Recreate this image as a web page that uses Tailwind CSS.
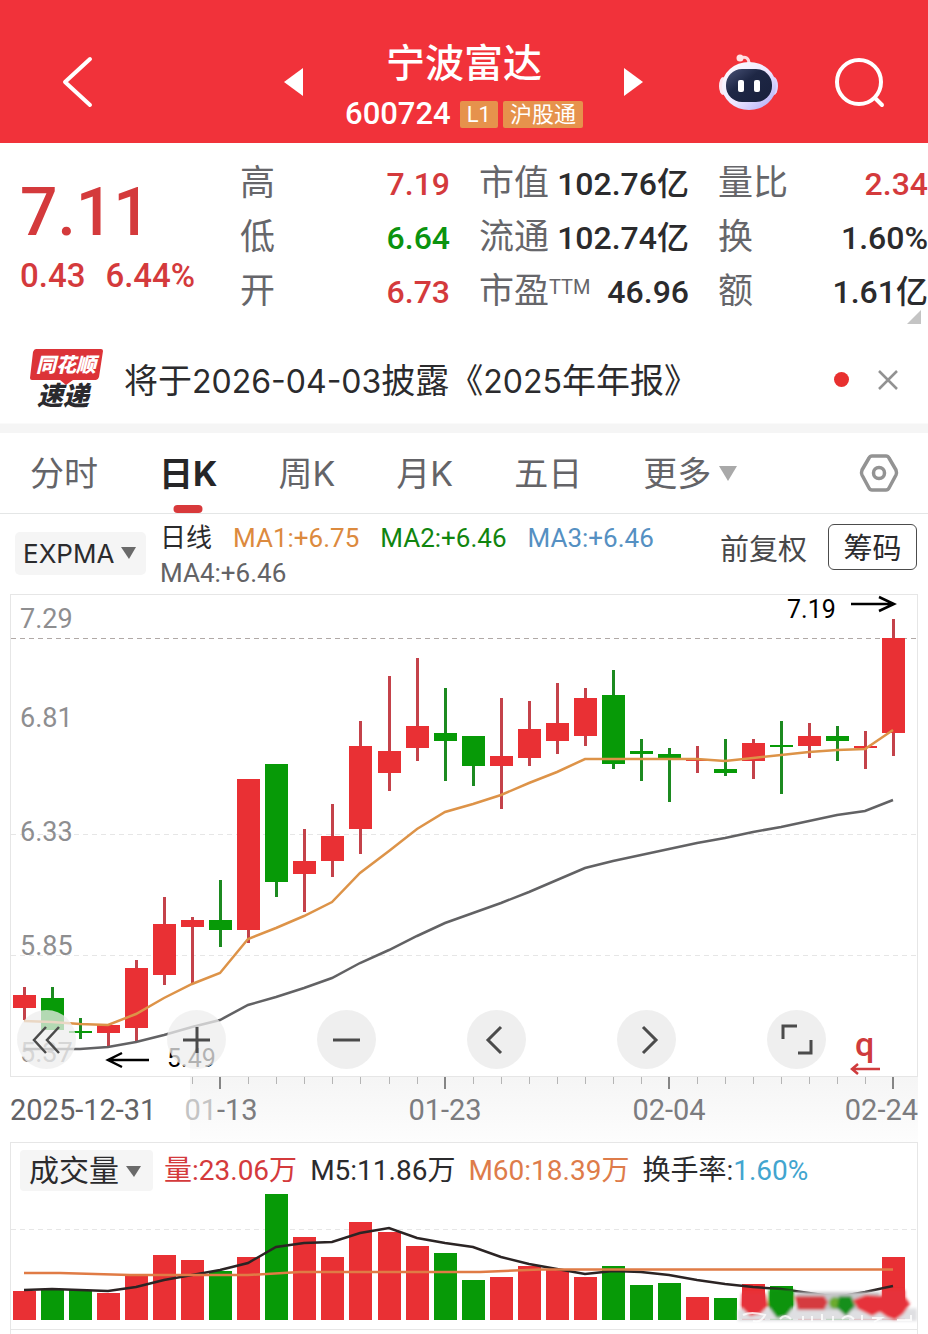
<!DOCTYPE html>
<html lang="zh-CN">
<head>
<meta charset="utf-8">
<meta name="viewport" content="width=device-width, initial-scale=1">
<title>宁波富达 600724</title>
<script src="https://cdn.jsdelivr.net/npm/@tailwindcss/browser@4"></script>
</head>
<body class="bg-white text-[#2b2b2d] font-['Roboto','Noto_Sans_CJK_SC',sans-serif]">

<header class="grid h-[143px] grid-cols-[1fr_auto_1fr] items-center bg-[#f1323a] pt-5 text-white">
  <div class="flex items-center justify-between pl-[60px]">
    <button aria-label="返回"><svg class="block" width="36" height="54" viewBox="0 0 36 54" fill="none" stroke="#fff" stroke-width="4" stroke-linecap="round" stroke-linejoin="round"><path d="M30 4 5 27 30 50"/></svg></button>
    <button aria-label="上一只" class="mr-[41px]"><svg class="block" width="20" height="30" viewBox="0 0 20 30" fill="#fff"><path d="M0 15 19 1V29Z"/></svg></button>
  </div>
  <div class="flex flex-col items-center pt-4">
    <h1 class="text-[39px] leading-[52px] font-medium">宁波富达</h1>
    <div class="flex h-[52px] items-center gap-[5px] pb-[2px]">
      <span class="mr-1 text-[31px] font-medium">600724</span>
      <span class="flex h-[27px] items-center rounded-[2px] bg-[#e6924c] px-[7px] text-[22px]">L1</span>
      <span class="flex h-[27px] items-center rounded-[2px] bg-[#e6924c] px-[7px] text-[22px]">沪股通</span>
    </div>
  </div>
  <div class="flex items-center justify-between pr-[42px] pl-[41px]">
    <button aria-label="下一只"><svg class="block" width="20" height="30" viewBox="0 0 20 30" fill="#fff"><path d="M19 15 0 1V29Z"/></svg></button>
    <div class="flex items-center gap-[54px]">
      <button aria-label="智能助手"><svg class="block" width="62" height="58" viewBox="0 0 62 58">
        <defs><linearGradient id="shell" x1="0" y1="0" x2="1" y2="1"><stop offset="0" stop-color="#fff"/><stop offset=".55" stop-color="#ece6ff"/><stop offset="1" stop-color="#a9a4f5"/></linearGradient>
        <linearGradient id="visor" x1="0" y1="0" x2="1" y2="1"><stop offset="0" stop-color="#4a5478"/><stop offset=".4" stop-color="#1e2745"/><stop offset="1" stop-color="#18203c"/></linearGradient></defs>
        <path d="M22 5q9-3 9 6" fill="none" stroke="#ffd9df" stroke-width="3"/><circle cx="22" cy="5" r="3.500" fill="#ffe3e6"/>
        <ellipse cx="5" cy="33" rx="4" ry="9" fill="#fbe6ef"/><ellipse cx="56" cy="33" rx="4" ry="9" fill="#dcd5ff"/>
        <ellipse cx="31" cy="33" rx="27" ry="24" fill="url(#shell)"/>
        <rect x="8" y="16" width="46" height="33" rx="16" fill="url(#visor)"/>
        <rect x="20" y="27" width="6" height="12" rx="2" fill="#fff"/><rect x="36" y="27" width="6" height="12" rx="2" fill="#fff"/>
      </svg></button>
      <button aria-label="搜索"><svg class="block" width="52" height="54" viewBox="0 0 52 54" fill="none" stroke="#fff" stroke-width="4" stroke-linecap="round"><circle cx="25" cy="27" r="22"/><path d="m41 43 7 7"/></svg></button>
    </div>
  </div>
</header>

<section class="relative flex pt-[14px] pb-[13px]">
  <div class="w-[240px] pt-[14px] pl-5 text-[#d43a3c]">
    <div class="text-[66px] leading-[84px] font-medium">7.11</div>
    <div class="flex gap-[20px] text-[33px] leading-[42px] font-medium"><span>0.43</span><span>6.44%</span></div>
  </div>
  <dl class="grid flex-1 grid-cols-3 gap-x-[29px] text-[32px] leading-[54px] font-medium">
    <div class="flex justify-between"><dt class="text-[35px] font-normal text-[#66666a]">高</dt><dd class="text-[#d43a3c]">7.19</dd></div>
    <div class="flex justify-between"><dt class="text-[35px] font-normal text-[#66666a]">市值</dt><dd>102.76亿</dd></div>
    <div class="flex justify-between"><dt class="text-[35px] font-normal text-[#66666a]">量比</dt><dd class="text-[#d43a3c]">2.34</dd></div>
    <div class="flex justify-between"><dt class="text-[35px] font-normal text-[#66666a]">低</dt><dd class="text-[#0b930f]">6.64</dd></div>
    <div class="flex justify-between"><dt class="text-[35px] font-normal text-[#66666a]">流通</dt><dd>102.74亿</dd></div>
    <div class="flex justify-between"><dt class="text-[35px] font-normal text-[#66666a]">换</dt><dd>1.60%</dd></div>
    <div class="flex justify-between"><dt class="text-[35px] font-normal text-[#66666a]">开</dt><dd class="text-[#d43a3c]">6.73</dd></div>
    <div class="flex justify-between"><dt class="flex text-[35px] font-normal text-[#66666a]">市盈<span class="text-[20px] leading-[44px]">TTM</span></dt><dd>46.96</dd></div>
    <div class="flex justify-between"><dt class="text-[35px] font-normal text-[#66666a]">额</dt><dd>1.61亿</dd></div>
  </dl>
  <svg class="absolute right-[7px] bottom-[8px]" width="14" height="14" viewBox="0 0 14 14" fill="#c4c4c4"><path d="M14 0V14H0Z"/></svg>
</section>

<section class="flex h-[92px] items-center border-b border-[#fafafa] pt-1 pr-[29px] pl-[29px]">
  <svg class="mr-5 shrink-0 overflow-visible" width="75" height="62" viewBox="0 0 75 62" font-family="'Noto Sans CJK SC',sans-serif" font-weight="900" font-style="italic">
    <path d="M7 0H72q2 0 2 2L70 28q-1 3-3 3H44l-7 5-6-5H3q-2 0-2-2L4 3q1-3 3-3Z" fill="#dc3338"/>
    <text x="7" y="23" font-size="20" fill="#fff">同花顺</text>
    <text x="8" y="56" font-size="26" fill="#2a2a2e">速递</text>
  </svg>
  <p class="flex-1 pt-1 text-[34px] whitespace-nowrap">将于<span class="font-['Inter'] text-[32px]">2026-04-03</span>披露《<span class="font-['Inter'] text-[32px]">2025</span>年年报》</p>
  <span class="size-[15px] rounded-full bg-[#e8302f]"></span>
  <button aria-label="关闭" class="ml-7"><svg class="block" width="22" height="22" viewBox="0 0 22 22" stroke="#929292" stroke-width="2.500" fill="none"><path d="M2 2 20 20M20 2 2 20"/></svg></button>
</section>

<nav class="border-t-[9px] border-b border-t-[#f5f5f5] border-b-[#e4e6e6]">
  <div class="flex h-[80px] items-center gap-[61px] pr-[29px] pl-[30px] font-['Inter','Noto_Sans_CJK_SC',sans-serif] text-[34px] text-[#646468]">
    <button>分时</button>
    <button class="relative h-full font-bold text-[#262628]">日K<span class="absolute bottom-0 left-1/2 h-[8px] w-[29px] -translate-x-1/2 rounded-[4px] bg-[#d8393b]"></span></button>
    <button>周K</button>
    <button>月K</button>
    <button>五日</button>
    <button class="flex items-center gap-2">更多<svg width="18" height="15" viewBox="0 0 18 15" fill="#a9a9a9"><path d="M0 0H18L9 15Z"/></svg></button>
    <button aria-label="设置" class="ml-auto"><svg class="block" width="40" height="38" viewBox="0 0 40 38" fill="none" stroke="#939393" stroke-width="3.500" stroke-linejoin="round"><path d="M13 2H27q2 0 3 2l7 12q1 3 0 5l-7 13q-1 2-3 2H13q-2 0-3-2L3 21q-1-2 0-5L10 4q1-2 3-2Z"/><circle cx="20" cy="19" r="5.500"/></svg></button>
  </div>
</nav>

<section class="flex items-start pt-[7px] pr-[11px] pb-[3px] pl-[15px]">
  <div class="relative mt-[11px] mr-[14px] h-[43px] w-[131px] shrink-0">
    <select aria-label="主图指标" class="h-full w-full appearance-none rounded-[5px] bg-[#f5f5f5] pl-[8px] font-['Inter'] text-[26px]"><option>EXPMA</option></select>
    <svg class="pointer-events-none absolute top-[15px] right-[10px]" width="15" height="12" viewBox="0 0 15 12" fill="#6a6a6a"><path d="M0 0H15L8 12Z"/></svg>
  </div>
  <div class="flex flex-1 flex-wrap gap-x-[21px] text-[26px] leading-[35px]">
    <span>日线</span>
    <span class="text-[#dc8a3e]">MA1:+6.75</span>
    <span class="text-[#11850f]">MA2:+6.46</span>
    <span class="text-[#5590c2]">MA3:+6.46</span>
    <span class="text-[#636366]">MA4:+6.46</span>
  </div>
  <button class="mt-[7px] mr-[21px] text-[29px] leading-[44px] text-[#48484a]">前复权</button>
  <button class="mt-[3px] h-[46px] w-[89px] shrink-0 rounded-[6px] border border-[#4c4c4c] pt-1 text-[29px] leading-none">筹码</button>
</section>

<section class="relative">
  <svg class="block h-auto w-full" viewBox="0 594 928 548" role="img" aria-label="日K线图">
    <defs><linearGradient id="axis" x1="0" y1="0" x2="0" y2="1"><stop offset="0" stop-color="#f5f5f5"/><stop offset="1" stop-color="#fdfdfd"/></linearGradient></defs>
    <rect x="190" y="1077" width="728" height="65" fill="url(#axis)"/>
    <rect x="10.500" y="594.500" width="907" height="482" fill="#fff" stroke="#e6e6e6"/>
    <g fill="none" stroke-dasharray="5 4"><path d="M11 638.500H917" stroke="#b0a9a6"/><path d="M11 834.500H917M11 955.500H917" stroke="#e6e6e6"/></g>
    <g font-family="Roboto" font-size="27" fill="#8e8e90"><text x="20" y="628">7.29</text><text x="20" y="727">6.81</text><text x="20" y="841">6.33</text><text x="20" y="955">5.85</text><text x="20" y="1062">5.37</text></g>
    <g id="candles"></g>
    <path id="slow" fill="none" stroke="#626264" stroke-width="2.500"/>
    <path id="fast" fill="none" stroke="#dd9348" stroke-width="2.500"/>
    <g font-family="Roboto" font-size="25" fill="#000"><text x="787" y="618">7.19</text><text x="167" y="1067">5.49</text></g>
    <path d="M851 604H893M879 597 894 604 879 611M149 1060H109M122 1053 108 1060 122 1067" fill="none" stroke="#000" stroke-width="2.500"/>
    <text x="855" y="1056" font-family="Roboto" font-size="34" font-weight="500" fill="#cf3b3d">q</text>
    <path d="M880 1069H852M858 1064 852 1069 858 1074" fill="none" stroke="#cf3b3d" stroke-width="2.500"/>
    <g id="ticks"></g>
    <g font-family="Roboto" font-size="29" fill="#7c7c7f"><text x="10" y="1120" fill="#636366">2025-12-31</text><text x="221" y="1120" text-anchor="middle"><tspan fill="#c4c4c4">01</tspan>-13</text><text x="445" y="1120" text-anchor="middle">01-23</text><text x="669" y="1120" text-anchor="middle">02-04</text><text x="918" y="1120" text-anchor="end">02-24</text></g>
  </svg>
  <div class="absolute bottom-[73px] left-[17px] flex gap-[91px]">
    <button aria-label="最早" class="size-[59px] rounded-full bg-[#eeeeee]/75"><svg width="59" height="59" viewBox="0 0 59 59" fill="none" stroke="#4b4b4b" stroke-width="2.500"><path d="M29 17 17 30 29 43M42 17 30 30 42 43"/></svg></button>
    <button aria-label="放大" class="size-[59px] rounded-full bg-[#eeeeee]/75"><svg width="59" height="59" viewBox="0 0 59 59" fill="none" stroke="#4b4b4b" stroke-width="3"><path d="M16 30H43M30 17V43"/></svg></button>
    <button aria-label="缩小" class="size-[59px] rounded-full bg-[#eeeeee]/95"><svg width="59" height="59" viewBox="0 0 59 59" fill="none" stroke="#4b4b4b" stroke-width="3"><path d="M16 30H43"/></svg></button>
    <button aria-label="左移" class="size-[59px] rounded-full bg-[#eeeeee]/95"><svg width="59" height="59" viewBox="0 0 59 59" fill="none" stroke="#4b4b4b" stroke-width="3"><path d="M34 17 21 30 34 43"/></svg></button>
    <button aria-label="右移" class="size-[59px] rounded-full bg-[#eeeeee]/95"><svg width="59" height="59" viewBox="0 0 59 59" fill="none" stroke="#4b4b4b" stroke-width="3"><path d="M26 17 39 30 26 43"/></svg></button>
    <button aria-label="全屏" class="size-[59px] rounded-full bg-[#eeeeee]/95"><svg width="59" height="59" viewBox="0 0 59 59" fill="none" stroke="#4b4b4b" stroke-width="3"><path d="M16 29V16H30M31 43H44V30"/></svg></button>
  </div>
</section>

<section class="mx-[10px] border border-[#e6e6e6]">
  <div class="flex items-center gap-[13px] pt-[6px] pl-[9px] text-[28px] leading-[43px] whitespace-nowrap">
    <div class="relative -mr-[2px] h-[41px] w-[133px] shrink-0">
      <select aria-label="副图指标" class="h-full w-full appearance-none rounded-[4px] bg-[#f5f5f5] pl-[9px] text-[30px] leading-[41px]"><option>成交量</option></select>
      <svg class="pointer-events-none absolute top-[16px] right-[12px]" width="15" height="11" viewBox="0 0 15 11" fill="#6a6a6a"><path d="M0 0H15L8 11Z"/></svg>
    </div>
    <span class="text-[#d43a3c]">量:23.06万</span>
    <span>M5:11.86万</span>
    <span class="text-[#de7c4a]">M60:18.39万</span>
    <span>换手率:<span class="text-[#42a5cf]">1.60%</span></span>
  </div>
  <svg class="block h-auto w-full" viewBox="11 1192 906 137" role="img" aria-label="成交量图">
    <defs><filter id="soft" x="-20%" y="-50%" width="140%" height="200%"><feGaussianBlur stdDeviation="1.500"/></filter></defs>
    <path d="M11 1229.500H917" stroke="#e6e6e6" stroke-dasharray="5 4"/>
    <g id="bars"></g>
    <path id="m5" fill="none" stroke="#2b2424" stroke-width="2.500"/>
    <path d="M24 1273H60L130 1275H248L300 1272H480L540 1269.500H893" fill="none" stroke="#e07b45" stroke-width="2.500"/>
    <g filter="url(#soft)">
      <path d="M740 1308H917V1321H738Z" fill="#e6e6e8"/>
      <path d="M796 1292H880V1320H796Z" fill="#c6c6c9"/>
      <path d="M738 1310H917V1321H738Z" fill="#dfdfe2"/>
      <path d="M742 1293H765L768 1306 760 1314 750 1316 741 1307Z" fill="#e6323a"/>
      <path d="M769 1290H794V1306L786 1316 777 1318 768 1306Z" fill="#0e9410"/>
      <path d="M795 1296H824L828 1302 824 1310H798Z" fill="#d53a40"/>
      <circle cx="835" cy="1303" r="6" fill="#6cab2e"/><path d="M839 1296H851L855 1306 846 1316 837 1308Z" fill="#178f1b"/>
      <path d="M853 1300 866 1295 882 1296V1290H905V1297L910 1304 903 1314 895 1320 887 1317 880 1312 872 1316 858 1309Z" fill="#e6323a"/>
    </g>
    <g fill="none" stroke="#fff" stroke-width="2" opacity=".8"><path d="M743 1315q8-4 22 0q-4 8-12 6M780 1319q5-6 11 0M803 1320v-4M812 1321v-5M822 1320v-6M833 1321v-5M842 1319q6-6 12 0M862 1320v-5M872 1318h9l-7 4M897 1320h14v-5"/></g>
  </svg>
</section>
<div class="mx-[10px] h-[4px] border-x border-[#e6e6e6]"></div>

<script>
// Each row: high, body top, body bottom, low, direction (1 = up), volume top
const rows = [
[987,995,1008,1020,1,1291],[987,998,1030,1030,0,1289],[1018,1031,1033,1039,0,1290],[1025,1025,1033,1047,1,1293],
[960,968,1028,1041,1,1275],[897,924,975,985,1,1255],[917,920,927,984,1,1260],[880,920,930,947,0,1271],
[779,779,930,943,1,1257],[764,764,882,897,0,1194],[829,861,874,912,1,1237],[804,836,861,877,1,1257],
[721,746,829,854,1,1222],[676,751,773,791,1,1232],[658,726,748,761,1,1246],[688,733,741,781,0,1253],
[736,736,766,786,0,1280],[698,756,766,809,1,1277],[701,729,758,766,1,1266],[683,723,741,754,1,1270],
[688,698,736,746,1,1277],[670,695,764,769,0,1266],[739,751,754,781,0,1285],[748,754,758,802,0,1283],
[746,759,761,773,1,1297],[739,769,773,776,0,1298],[739,743,761,779,1,1284],[721,745,747,794,0,1286],
[723,736,746,758,1,1298],[726,736,741,761,0,1300],[731,746,748,769,1,1298],[619,638,733,756,1,1257]];
const fast = [1021,1022,1024,1025,1014,998,984,973,939,928,916,902,873,851,829,812,804,795,783,772,759,759,759,759,759,761,758,755,752,750,749,730];
const slow = [1049,1049,1049,1047,1042,1035,1027,1020,1005,997,988,978,963,950,936,923,913,903,892,880,868,861,855,849,843,838,832,827,821,815,811,800];
const m5 = [1290,1289,1290,1291,1287,1280,1275,1270,1263,1247,1243,1242,1233,1228,1238,1243,1247,1257,1264,1269,1274,1271,1272,1275,1280,1284,1287,1289,1293,1297,1292,1286];
const x = i => Math.round(24 + 28.04 * i);
const line = a => a.map((y, i) => (i ? 'L' : 'M') + x(i) + ' ' + y).join('');
const el = id => document.getElementById(id);
el('candles').innerHTML = rows.map(([h, t, b, l, up], i) =>
  `<g fill="${up ? '#e93034' : '#079a07'}"><rect x="${x(i) - 1}" y="${h}" width="3" height="${l - h}" fill="${up ? '#c4424a' : '#1c8a20'}"/><rect x="${x(i) - 11}" y="${t}" width="23" height="${b - t}"/></g>`).join('');
el('bars').innerHTML = rows.map((r, i) =>
  `<rect x="${x(i) - 11}" y="${r[5]}" width="23" height="${1320 - r[5]}" fill="${r[4] ? '#e93034' : '#079a07'}"/>`).join('');
el('ticks').innerHTML = rows.map((r, i) => i < 6 ? '' : i % 8 === 7
  ? `<rect x="${x(i) - 1}" y="1077" width="2" height="12" fill="#858585"/>`
  : `<rect x="${x(i)}" y="1077" width="1" height="7" fill="#b5b5b5"/>`).join('');
el('fast').setAttribute('d', line(fast));
el('slow').setAttribute('d', line(slow));
el('m5').setAttribute('d', line(m5));
</script>
</body>
</html>
